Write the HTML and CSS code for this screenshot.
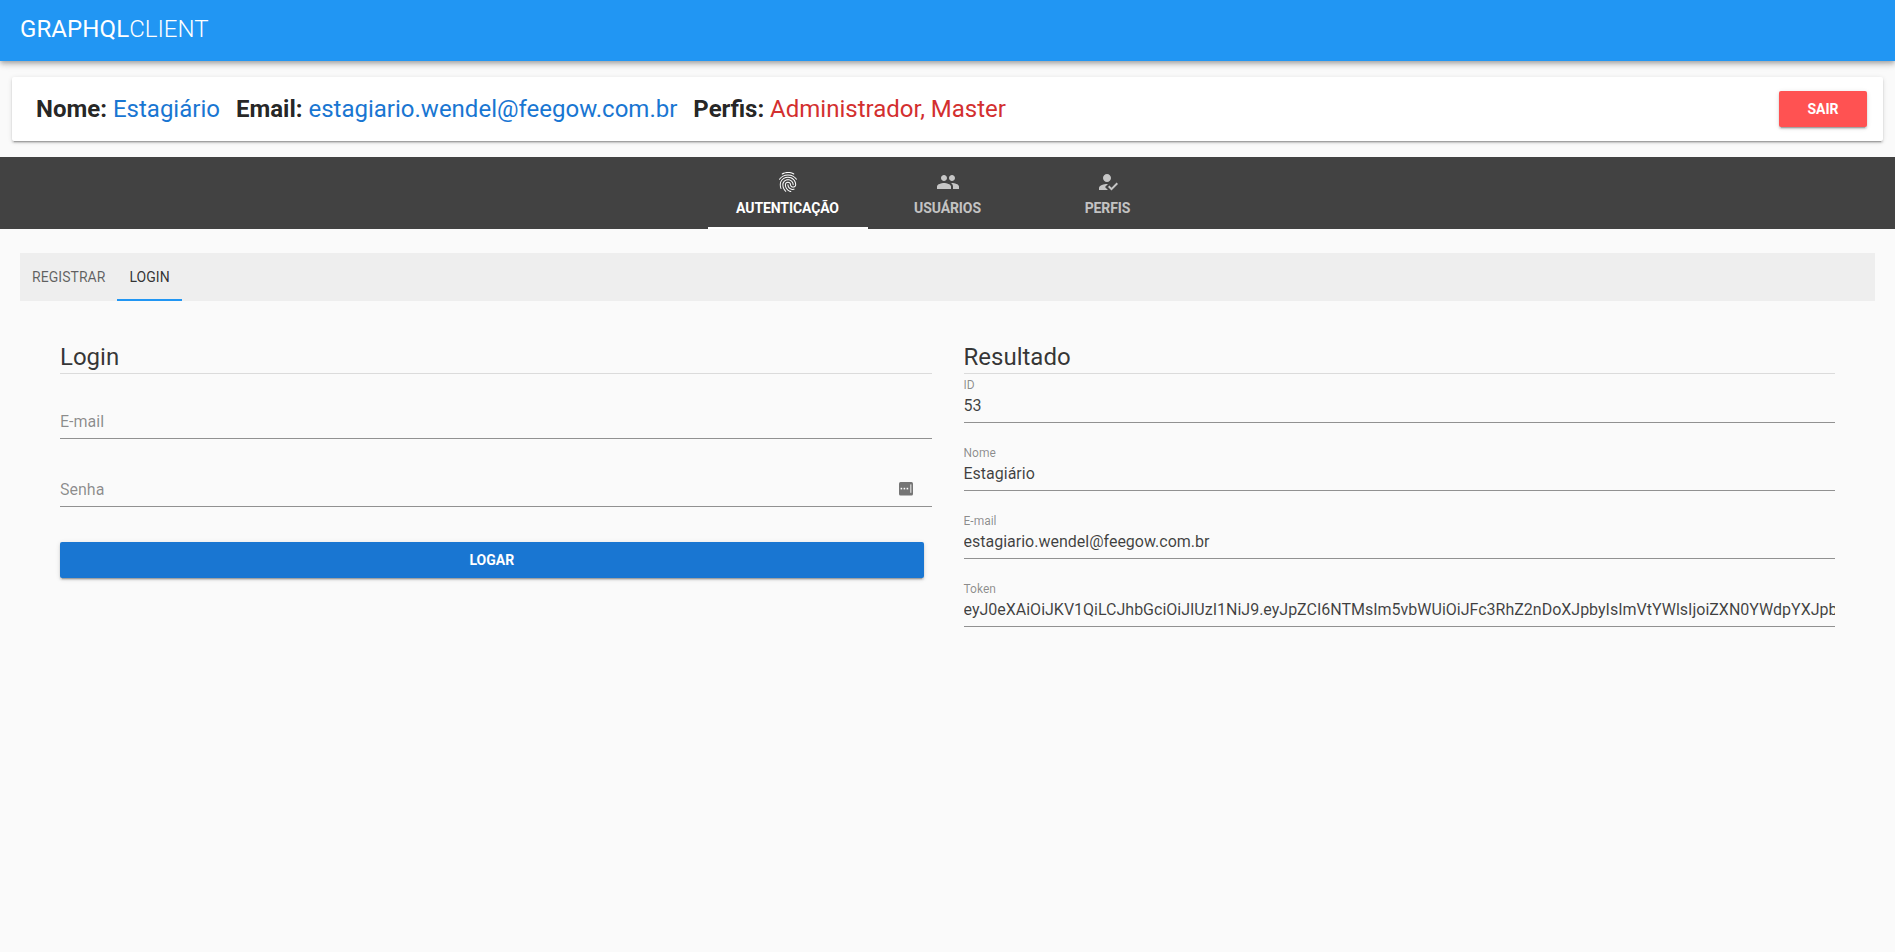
FILE: index.html
```html
<!DOCTYPE html>
<html lang="pt-BR">
<head>
<meta charset="UTF-8">
<meta name="viewport" content="width=device-width, initial-scale=1.0">
<title>GraphQL Client</title>
<link rel="stylesheet" href="styles.css">
</head>
<body>

<header class="toolbar">
  <div class="toolbar-title"><strong>GRAPHQL</strong><span>CLIENT</span></div>
</header>

<section class="user-card">
  <div class="user-info">
    <span class="info-item"><b>Nome:</b> <span class="text-blue">Estagiário</span></span>
    <span class="info-item"><b>Email:</b> <span class="text-blue">estagiario.wendel@feegow.com.br</span></span>
    <span class="info-item"><b>Perfis:</b> <span class="text-red">Administrador, Master</span></span>
  </div>
  <button type="button" class="btn btn-red">Sair</button>
</section>

<nav class="main-tabs">
  <a href="#" class="main-tab active">
    <svg class="tab-icon" viewBox="0 0 24 24"><path d="M17.81 4.47c-.08 0-.16-.02-.23-.06C15.66 3.42 14 3 12.01 3c-1.98 0-3.86.47-5.57 1.41-.24.13-.54.04-.68-.2-.13-.24-.04-.55.2-.68C7.82 2.52 9.86 2 12.01 2c2.13 0 3.99.47 6.03 1.52.25.13.34.43.21.67-.09.18-.26.28-.44.28zM3.5 9.72c-.1 0-.2-.03-.29-.09-.23-.16-.28-.47-.12-.7.99-1.4 2.25-2.5 3.75-3.27C9.98 4.04 14 4.03 17.15 5.65c1.5.77 2.76 1.86 3.75 3.25.16.22.11.54-.12.7-.23.16-.54.11-.7-.12-.9-1.26-2.04-2.25-3.39-2.94-2.87-1.47-6.54-1.47-9.4.01-1.36.7-2.5 1.7-3.4 2.96-.08.14-.23.21-.39.21zm6.25 12.07c-.13 0-.26-.05-.35-.15-.87-.87-1.34-1.43-2.01-2.64-.69-1.23-1.05-2.73-1.05-4.34 0-2.97 2.54-5.39 5.66-5.39s5.66 2.42 5.66 5.39c0 .28-.22.5-.5.5s-.5-.22-.5-.5c0-2.42-2.09-4.39-4.66-4.39-2.57 0-4.66 1.97-4.66 4.39 0 1.44.32 2.77.93 3.85.64 1.15 1.08 1.64 1.85 2.42.19.2.19.51 0 .71-.11.1-.24.15-.37.15zm7.17-1.85c-1.19 0-2.24-.3-3.1-.89-1.49-1.01-2.38-2.65-2.38-4.39 0-.28.22-.5.5-.5s.5.22.5.5c0 1.41.72 2.74 1.94 3.56.71.48 1.54.71 2.54.71.24 0 .64-.03 1.04-.1.27-.05.53.13.58.41.05.27-.13.53-.41.58-.57.11-1.07.12-1.21.12zM14.91 22c-.04 0-.09-.01-.13-.02-1.59-.44-2.63-1.03-3.72-2.1-1.4-1.39-2.17-3.24-2.17-5.22 0-1.62 1.38-2.94 3.08-2.94 1.7 0 3.08 1.32 3.08 2.94 0 1.07.93 1.94 2.08 1.94s2.08-.87 2.08-1.94c0-3.77-3.25-6.83-7.25-6.83-2.84 0-5.44 1.58-6.61 4.03-.39.81-.59 1.76-.59 2.8 0 .78.07 2.01.67 3.61.1.26-.03.55-.29.64-.26.1-.55-.04-.64-.29-.49-1.31-.73-2.61-.73-3.96 0-1.2.23-2.29.68-3.24 1.33-2.79 4.28-4.6 7.51-4.6 4.55 0 8.25 3.51 8.25 7.83 0 1.62-1.38 2.94-3.08 2.94s-3.08-1.32-3.08-2.94c0-1.07-.93-1.94-2.08-1.94s-2.08.87-2.08 1.94c0 1.71.66 3.31 1.87 4.51.95.94 1.86 1.46 3.27 1.85.27.07.42.35.35.61-.05.23-.26.38-.47.38z"/></svg>
    <span>Autenticação</span>
  </a>
  <a href="#" class="main-tab">
    <svg class="tab-icon" viewBox="0 0 24 24"><path d="M16 11c1.66 0 2.99-1.34 2.99-3S17.66 5 16 5c-1.66 0-3 1.34-3 3s1.34 3 3 3zm-8 0c1.66 0 2.99-1.34 2.99-3S9.66 5 8 5C6.34 5 5 6.34 5 8s1.34 3 3 3zm0 2c-2.33 0-7 1.17-7 3.5V19h14v-2.5c0-2.33-4.67-3.5-7-3.5zm8 0c-.29 0-.62.02-.97.05 1.16.84 1.97 1.97 1.97 3.45V19h6v-2.5c0-2.33-4.67-3.5-7-3.5z"/></svg>
    <span>Usuários</span>
  </a>
  <a href="#" class="main-tab">
    <svg class="tab-icon" viewBox="0 0 24 24"><path fill-rule="evenodd" d="M9 17l3-2.94c-.39-.04-.68-.06-1-.06-2.67 0-8 1.34-8 4v2h9l-3-3zm2-5c2.21 0 4-1.79 4-4s-1.79-4-4-4-4 1.79-4 4 1.79 4 4 4"/><path fill-rule="evenodd" d="M15.47 20.5L12 17l1.4-1.41 2.07 2.08 5.13-5.17 1.4 1.41z"/></svg>
    <span>Perfis</span>
  </a>
</nav>

<main class="content">
  <div class="sub-tabs">
    <a href="#" class="sub-tab">Registrar</a>
    <a href="#" class="sub-tab active">Login</a>
  </div>

  <div class="columns">
    <form class="column login-form">
      <h2 class="column-title">Login</h2>

      <div class="field">
        <input type="text" placeholder="E-mail">
      </div>
      <div class="field">
        <div class="field-row">
          <input type="password" placeholder="Senha">
          <svg class="key-icon" viewBox="0 0 16 16">
            <rect x="1" y="1" width="14" height="13.5" rx="1.5" fill="#757575"/>
            <rect x="2.6" y="6.8" width="1.6" height="1.6" fill="#fff"/>
            <rect x="5.6" y="6.8" width="1.6" height="1.6" fill="#fff"/>
            <rect x="8.6" y="6.8" width="1.6" height="1.6" fill="#fff"/>
            <rect x="12.2" y="3.4" width="1.2" height="8.4" fill="#ddd"/>
          </svg>
        </div>
      </div>

      <button type="button" class="btn btn-blue">Logar</button>
    </form>

    <div class="column">
      <h2 class="column-title">Resultado</h2>

      <div class="field">
        <label>ID</label>
        <input type="text" value="53" readonly>
      </div>
      <div class="field">
        <label>Nome</label>
        <input type="text" value="Estagiário" readonly>
      </div>
      <div class="field">
        <label>E-mail</label>
        <input type="text" value="estagiario.wendel@feegow.com.br" readonly>
      </div>
      <div class="field">
        <label>Token</label>
        <input type="text" value="eyJ0eXAiOiJKV1QiLCJhbGciOiJIUzI1NiJ9.eyJpZCI6NTMsIm5vbWUiOiJFc3RhZ2nDoXJpbyIsImVtYWlsIjoiZXN0YWdpYXJpbW8ud2VuZGVsQGZlZWdvdy5jb20uYnIifQ" readonly>
      </div>
    </div>
  </div>
</main>

</body>
</html>
```

FILE: styles.css
```css
/* page */
body {
  font-family: Roboto, "Liberation Sans", sans-serif;
  margin: 0;
  padding: 0;
  background-color: #fafafa;
  color: rgba(0, 0, 0, 0.87);
}

a {
  text-decoration: none;
}

/* top bar */
.toolbar {
  display: flex;
  align-items: center;
  height: 61px;
  padding: 0 20px;
  background-color: #2196f3;
  color: #fff;
  box-shadow: 0 2px 4px -1px rgba(0, 0, 0, 0.2), 0 4px 5px 0 rgba(0, 0, 0, 0.14), 0 1px 10px 0 rgba(0, 0, 0, 0.12);
}

.toolbar-title {
  font-size: 24px;
  line-height: 1;
  margin-top: -4px;
}

.toolbar-title strong {
  font-weight: 400;
  letter-spacing: 0.1px;
}

.toolbar-title span {
  font-weight: 300;
}

/* logged user */
.user-card {
  display: flex;
  justify-content: space-between;
  align-items: center;
  height: 64px;
  margin: 16px 12px;
  padding: 0 16px 0 24px;
  background-color: #fff;
  border-radius: 2px;
  box-shadow: 0 3px 1px -2px rgba(0, 0, 0, 0.2), 0 2px 2px 0 rgba(0, 0, 0, 0.14), 0 1px 5px 0 rgba(0, 0, 0, 0.12);
}

.user-info {
  display: flex;
  gap: 16px;
  font-size: 24px;
}

.user-info b {
  font-weight: 700;
}

.text-blue {
  color: #1976d2;
}

.text-red {
  color: #d32f2f;
}

/* buttons */
.btn {
  height: 36px;
  border: none;
  border-radius: 2px;
  color: #fff;
  font-family: inherit;
  font-size: 14px;
  font-weight: 700;
  text-transform: uppercase;
  cursor: pointer;
  box-shadow: 0 3px 1px -2px rgba(0, 0, 0, 0.2), 0 2px 2px 0 rgba(0, 0, 0, 0.14), 0 1px 5px 0 rgba(0, 0, 0, 0.12);
}

.btn-red {
  width: 88px;
  background-color: #ff5252;
}

.btn-blue {
  display: block;
  width: calc(100% - 8px);
  margin-top: 35px;
  background-color: #1976d2;
}

/* main tabs */
.main-tabs {
  display: flex;
  justify-content: center;
  height: 72px;
  background-color: #424242;
}

.main-tab {
  display: flex;
  flex-direction: column;
  align-items: center;
  box-sizing: border-box;
  width: 160px;
  padding-top: 13px;
  color: rgba(255, 255, 255, 0.7);
  font-size: 14px;
  font-weight: 700;
  letter-spacing: -0.1px;
  text-transform: uppercase;
}

.main-tab.active {
  color: #fff;
  border-bottom: 2px solid #fff;
}

.tab-icon {
  width: 24px;
  height: 24px;
  margin-bottom: 6px;
  fill: currentColor;
}

/* content */
.content {
  margin: 24px 20px 0;
}

.sub-tabs {
  display: flex;
  height: 48px;
  background-color: #eeeeee;
}

.sub-tab {
  display: flex;
  align-items: center;
  padding: 0 12px;
  color: rgba(0, 0, 0, 0.6);
  font-size: 14px;
  letter-spacing: 0.05px;
  text-transform: uppercase;
}

.sub-tab.active {
  color: rgba(0, 0, 0, 0.8);
  box-shadow: inset 0 -2px 0 #2196f3;
}

.columns {
  display: flex;
  gap: 32px;
  padding: 40px 40px 0;
}

.column {
  flex: 1;
  min-width: 0;
}

.column-title {
  height: 32px;
  margin: 0;
  color: rgba(0, 0, 0, 0.8);
  font-size: 24px;
  font-weight: 400;
  line-height: 32px;
  border-bottom: 1px solid rgba(0, 0, 0, 0.12);
}

.login-form .column-title {
  margin-bottom: 16px;
}

/* fields */
.field {
  display: flex;
  flex-direction: column;
  justify-content: flex-end;
  box-sizing: border-box;
  height: 49px;
  margin-bottom: 19px;
  border-bottom: 1px solid rgba(0, 0, 0, 0.42);
}

.field label {
  color: rgba(0, 0, 0, 0.45);
  font-size: 12px;
  line-height: 14px;
}

.field input {
  width: 100%;
  box-sizing: border-box;
  height: 27px;
  margin-bottom: 3px;
  padding: 0;
  border: none;
  outline: none;
  background: transparent;
  color: rgba(0, 0, 0, 0.75);
  font-family: inherit;
  font-size: 16px;
}

.field input::placeholder {
  color: rgba(0, 0, 0, 0.45);
}

.field-row {
  display: flex;
  align-items: center;
}

.key-icon {
  flex: none;
  width: 16px;
  height: 16px;
  margin: -4px 18px 0 8px;
}
```
